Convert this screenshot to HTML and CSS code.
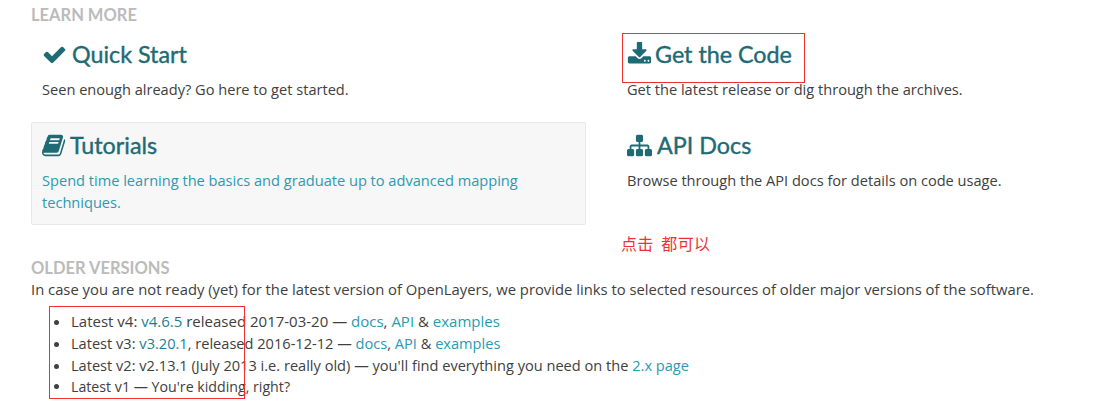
FILE: index.html
```html
<!DOCTYPE html>
<html lang="en">
<head>
<meta charset="utf-8">
<title>OpenLayers</title>
<link rel="stylesheet" href="styles.css">
</head>
<body>
<main class="page">
  <h4 class="section-title">LEARN MORE</h4>
  <div class="cards">
    <section class="card">
      <h3 class="card-title"><svg class="icon" viewBox="0 0 1792 1792"><path d="M1671 566q0 40-28 68l-724 724-136 136q-28 28-68 28t-68-28l-136-136-362-362q-28-28-28-68t28-68l136-136q28-28 68-28t68 28l294 295 656-657q28-28 68-28t68 28l136 136q28 28 28 68z"/></svg>Quick Start</h3>
      <p class="card-text">Seen enough already? Go here to get started.</p>
    </section>
    <section class="card">
      <h3 class="card-title"><svg class="icon icon-tight" viewBox="0 0 1792 1792"><path d="M1344 1344q0-26-19-45t-45-19-45 19-19 45 19 45 45 19 45-19 19-45zm256 0q0-26-19-45t-45-19-45 19-19 45 19 45 45 19 45-19 19-45zm128-224v320q0 40-28 68t-68 28h-1472q-40 0-68-28t-28-68v-320q0-40 28-68t68-28h465l135 136q58 56 136 56t136-56l136-136h464q40 0 68 28t28 68zm-325-569q17 41-14 70l-448 448q-18 19-45 19t-45-19l-448-448q-31-29-14-70 17-39 59-39h256v-448q0-26 19-45t45-19h256q26 0 45 19t19 45v448h256q42 0 59 39z"/></svg>Get the Code</h3>
      <p class="card-text">Get the latest release or dig through the archives.</p>
    </section>
    <section class="card card-well">
      <h3 class="card-title"><svg class="icon icon-tight" viewBox="0 0 1792 1792"><path d="M1639 478q40 57 18 129l-275 906q-19 64-76.500 107.500t-122.500 43.500h-923q-77 0-148.500-53.500t-99.500-131.500q-24-67-2-127 0-4 3-27t4-37q1-8-3-21.500t-3-19.500q2-11 8-21t16.500-23.500 16.500-23.500q23-38 45-91.500t30-91.500q3-10 .5-30t-.5-28q3-11 17-28t17-23q21-36 42-92t25-90q1-9-2.500-32t.5-28q4-13 22-30.500t22-22.500q19-26 42.500-84.500t27.500-96.500q1-8-3-25.500t-2-26.500q2-8 9-18t18-23 17-21q8-12 16.500-30.500t15-35 16-36 19.500-32 26.500-23.500 36-11.500 47.500 5.500l-1 3q38-9 51-9h761q74 0 114 56t18 130l-274 906q-36 119-71.500 153.500t-128.500 34.500h-869q-27 0-38 15-11 16-1 43 24 70 144 70h923q29 0 56-15.500t35-41.500l300-987q7-22 5-57 38 15 59 43zm-1064 2q-4 13 2 22.500t20 9.500h608q13 0 25.500-9.500t16.500-22.500l21-64q4-13-2-22.500t-20-9.500h-608q-13 0-25.500 9.500t-16.500 22.500zm-83 256q-4 13 2 22.500t20 9.500h608q13 0 25.500-9.500t16.500-22.500l21-64q4-13-2-22.500t-20-9.500h-608q-13 0-25.500 9.500t-16.500 22.500z"/></svg>Tutorials</h3>
      <p class="card-text card-link">Spend time learning the basics and graduate up to advanced mapping techniques.</p>
    </section>
    <section class="card card-low">
      <h3 class="card-title"><svg class="icon" viewBox="0 0 1792 1792"><path d="M1792 1248v320q0 40-28 68t-68 28h-320q-40 0-68-28t-28-68v-320q0-40 28-68t68-28h96v-192h-512v192h96q40 0 68 28t28 68v320q0 40-28 68t-68 28h-320q-40 0-68-28t-28-68v-320q0-40 28-68t68-28h96v-192h-512v192h96q40 0 68 28t28 68v320q0 40-28 68t-68 28h-320q-40 0-68-28t-28-68v-320q0-40 28-68t68-28h96v-192q0-52 38-90t90-38h512v-192h-96q-40 0-68-28t-28-68v-320q0-40 28-68t68-28h320q40 0 68 28t28 68v320q0 40-28 68t-68 28h-96v192h512q52 0 90 38t38 90v192h96q40 0 68 28t28 68z"/></svg>API Docs</h3>
      <p class="card-text">Browse through the API docs for details on code usage.</p>
    </section>
  </div>
  <h4 class="section-title older-title">OLDER VERSIONS</h4>
  <p class="intro">In case you are not ready (yet) for the latest version of OpenLayers, we provide links to selected resources of older major versions of the software.</p>
  <ul class="versions">
    <li class="line-wide">Latest v4: <a class="ver" href="#">v4.6.5</a> released 2017-03-20 — <a href="#">docs</a>, <a href="#">API</a> &amp; <a href="#">examples</a></li>
    <li>Latest v3: <a class="ver" href="#">v3.20.1</a>, released 2016-12-12 — <a href="#">docs</a>, <a href="#">API</a> &amp; <a href="#">examples</a></li>
    <li>Latest v2: v2.13.1 (July 2013 i.e. really old) — you'll find everything you need on the <a href="#">2.x page</a></li>
    <li class="line-narrow">Latest v1 — You're kidding, right?</li>
  </ul>
</main>
<div class="mark mark-code"></div>
<div class="mark mark-list"></div>
<div class="note">点击&nbsp;&nbsp;都可以</div>
</body>
</html>
```

FILE: styles.css
```css
html, body { margin: 0; padding: 0; background: #fff; }
body {
  width: 1098px;
  height: 402px;
  overflow: hidden;
  position: relative;
  font-family: "Open Sans", "Liberation Sans", sans-serif;
  font-size: 14.6px;
  line-height: 22px;
  color: #404040;
}
.page { padding: 4px 0 0 31px; width: 1040px; }
.section-title {
  margin: 0;
  font-family: Lato, "Open Sans", sans-serif;
  font-size: 16.5px;
  line-height: 22px;
  font-weight: 700;
  color: #bbb;
}
.cards {
  display: grid;
  grid-template-columns: 555px 1fr;
  column-gap: 30px;
  grid-template-rows: 96px 103px;
}
.card { padding: 13px 11px 0; box-sizing: border-box; }
.card-low { padding-top: 8px; }
.card-well {
  background: #f7f7f7;
  border: 1px solid #e8e8e8;
  border-radius: 2px;
  padding: 7px 10px 0;
}
.card-title {
  margin: 0;
  display: flex;
  align-items: center;
  font-family: Lato, "Open Sans", sans-serif;
  font-size: 23.3px;
  line-height: 30px;
  font-weight: 400;
  -webkit-text-stroke: 0.4px #1f6b75;
  color: #1f6b75;
}
.icon { width: 25px; height: 25px; fill: #1f6b75; margin-right: 5px; flex: none; }
.icon-tight { margin-right: 3px; }
.card-text { margin: 9px 0 0; }
.card-link { color: #2a9bb0; }
.older-title { margin-top: 32px; }
.intro { margin: -1px 0 0; white-space: nowrap; font-size: 14.8px; }
.versions { margin: 10px 0 0; padding: 0 0 0 40px; list-style: disc; }
.versions li { white-space: nowrap; }
.versions .line-wide { font-size: 15px; }
.versions .line-narrow { font-size: 14.2px; }
a { color: #2a9bb0; text-decoration: none; }
.versions .ver { color: #1f7f90; }
.mark { position: absolute; border: 1px solid #f23030; box-sizing: border-box; }
.mark-code { left: 622px; top: 33px; width: 183px; height: 50px; }
.mark-list { left: 49px; top: 306px; width: 196px; height: 93px; }
.note {
  position: absolute;
  left: 621px;
  top: 232px;
  font-family: "Noto Sans CJK SC", sans-serif;
  font-size: 16px;
  letter-spacing: 0.3px;
  line-height: 22px;
  color: #f23030;
}
```
